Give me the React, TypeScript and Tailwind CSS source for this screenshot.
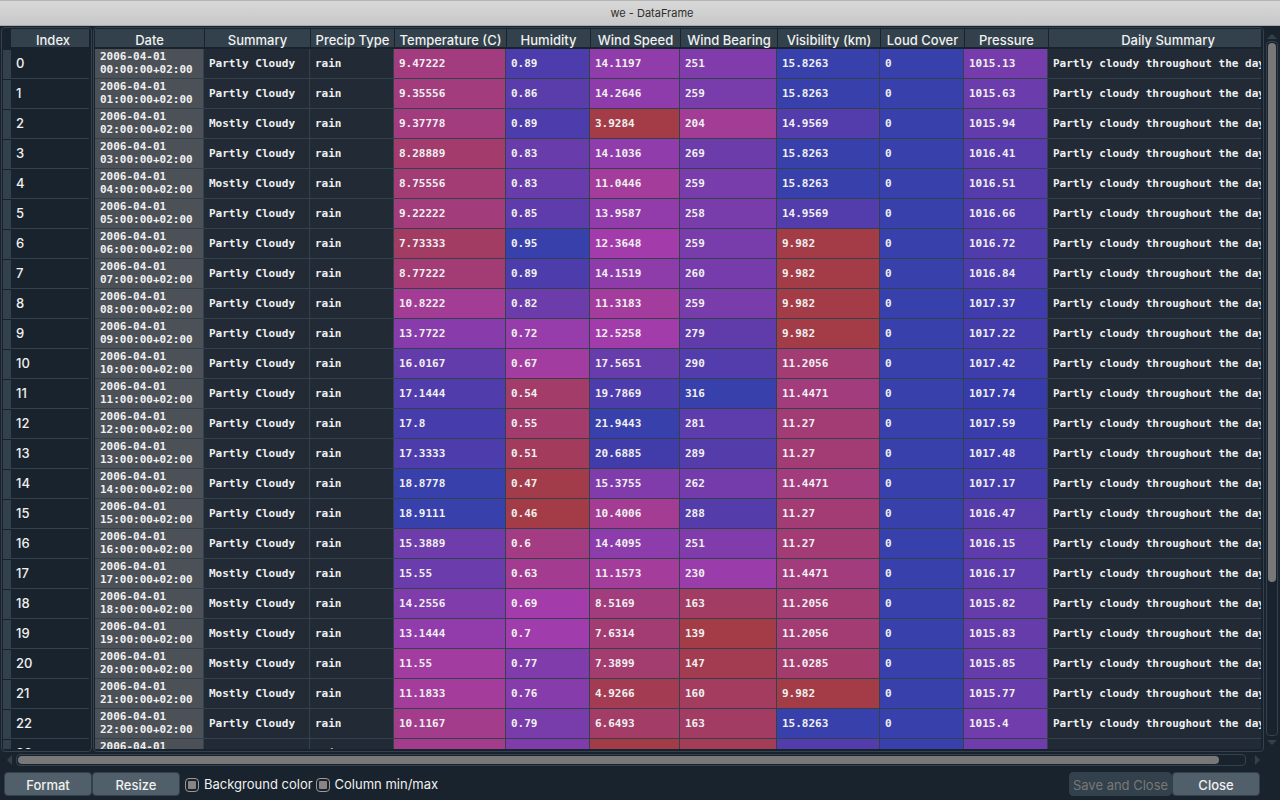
import React from "react";

type Row = [string, string, string, string, string, string, string, string, string];

// summary, temperature, humidity, wind speed, wind bearing, visibility, loud cover, pressure, daily summary
const daily = "Partly cloudy throughout the day.";
const P = "Partly Cloudy";
const M = "Mostly Cloudy";

const rows: Row[] = [
  [P, "9.47222", "0.89", "14.1197", "251", "15.8263", "0", "1015.13", daily],
  [P, "9.35556", "0.86", "14.2646", "259", "15.8263", "0", "1015.63", daily],
  [M, "9.37778", "0.89", "3.9284", "204", "14.9569", "0", "1015.94", daily],
  [P, "8.28889", "0.83", "14.1036", "269", "15.8263", "0", "1016.41", daily],
  [M, "8.75556", "0.83", "11.0446", "259", "15.8263", "0", "1016.51", daily],
  [P, "9.22222", "0.85", "13.9587", "258", "14.9569", "0", "1016.66", daily],
  [P, "7.73333", "0.95", "12.3648", "259", "9.982", "0", "1016.72", daily],
  [P, "8.77222", "0.89", "14.1519", "260", "9.982", "0", "1016.84", daily],
  [P, "10.8222", "0.82", "11.3183", "259", "9.982", "0", "1017.37", daily],
  [P, "13.7722", "0.72", "12.5258", "279", "9.982", "0", "1017.22", daily],
  [P, "16.0167", "0.67", "17.5651", "290", "11.2056", "0", "1017.42", daily],
  [P, "17.1444", "0.54", "19.7869", "316", "11.4471", "0", "1017.74", daily],
  [P, "17.8", "0.55", "21.9443", "281", "11.27", "0", "1017.59", daily],
  [P, "17.3333", "0.51", "20.6885", "289", "11.27", "0", "1017.48", daily],
  [P, "18.8778", "0.47", "15.3755", "262", "11.4471", "0", "1017.17", daily],
  [P, "18.9111", "0.46", "10.4006", "288", "11.27", "0", "1016.47", daily],
  [P, "15.3889", "0.6", "14.4095", "251", "11.27", "0", "1016.15", daily],
  [M, "15.55", "0.63", "11.1573", "230", "11.4471", "0", "1016.17", daily],
  [M, "14.2556", "0.69", "8.5169", "163", "11.2056", "0", "1015.82", daily],
  [M, "13.1444", "0.7", "7.6314", "139", "11.2056", "0", "1015.83", daily],
  [M, "11.55", "0.77", "7.3899", "147", "11.0285", "0", "1015.85", daily],
  [M, "11.1833", "0.76", "4.9266", "160", "9.982", "0", "1015.77", daily],
  [P, "10.1167", "0.79", "6.6493", "163", "15.8263", "0", "1015.4", daily],
  [M, "10.2", "0.77", "3.9284", "152", "14.9569", "0", "1015.51", daily],
];

const columns = [
  { name: "Date", width: "w-[109px]" },
  { name: "Summary", width: "w-[106px]" },
  { name: "Precip Type", width: "w-[84px]" },
  { name: "Temperature (C)", width: "w-[112px]" },
  { name: "Humidity", width: "w-[84px]" },
  { name: "Wind Speed", width: "w-[90px]" },
  { name: "Wind Bearing", width: "w-[97px]" },
  { name: "Visibility (km)", width: "w-[103px]" },
  { name: "Loud Cover", width: "w-[84px]" },
  { name: "Pressure", width: "w-[84px]" },
  { name: "Daily Summary", width: "" },
];

// [min, max] of each numeric column
const ranges: Record<number, [number, number]> = {
  1: [6, 18.9111],
  2: [0.46, 0.95],
  3: [3.9284, 21.9443],
  4: [139, 316],
  5: [9.982, 15.8263],
  6: [-1, 0],
  7: [1009.2, 1017.9],
};

function heat(column: number, value: number): string {
  const [min, max] = ranges[column];
  const hue = 0.66 + 0.33 * Math.min(1, (max - value) / (max - min));
  return `hsl(${(hue * 360).toFixed(1)} 100% 65% / 0.6)`;
}

function Arrow({ d }: { d: string }) {
  return (
    <svg viewBox="0 0 10 10" className="size-[10px] shrink-0 fill-[#32414b]" aria-hidden="true">
      <path d={d} />
    </svg>
  );
}

const pane = "overflow-hidden rounded border border-[#32414b] pt-px pr-0.5 pb-0.5 pl-px";
const heading = "border-b-2 border-[#19232d] bg-[#32414b] p-0 pt-1 leading-[14px] font-medium whitespace-nowrap";

function IndexTable() {
  return (
    <div className={`w-[91px] shrink-0 ${pane}`}>
      <div className="h-full overflow-hidden">
        <table className="w-full table-fixed border-separate border-spacing-0 text-[13px]">
          <thead>
            <tr className="h-5">
              <td className="w-2 p-0" />
              <th scope="col" className={`${heading} pl-1.5`}>
                Index
              </th>
            </tr>
          </thead>
          <tbody>
            {rows.map((_, i) => (
              <tr key={i} className="h-[30px]">
                <td className="border-t border-[#19232d] bg-[#32414b] p-0" />
                <th scope="row" className="border-b border-[#32414b] p-0 pb-0.5 pl-[5px] text-left leading-5 font-medium">
                  {i}
                </th>
              </tr>
            ))}
          </tbody>
        </table>
      </div>
    </div>
  );
}

function DataTable() {
  const cell = "overflow-hidden border-b border-[#32414b] py-0 pr-0 pl-[5px] whitespace-nowrap";
  return (
    <div id="frame" className={`ml-px min-w-0 flex-1 ${pane}`}>
      <div className="h-full overflow-hidden">
        <table className="w-[calc(100%+26px)] table-fixed border-separate border-spacing-0">
          <thead>
            <tr className="h-5 text-[13px]">
              {columns.map((c, i) => (
                <th key={c.name} scope="col" className={`${c.width} ${i > 0 ? "border-l" : ""} ${heading}`}>
                  {c.name}
                </th>
              ))}
            </tr>
          </thead>
          <tbody className="font-['DejaVu_Sans_Mono',monospace] text-[11px] leading-[13px] font-bold">
            {rows.map((r, i) => (
              <tr key={i} className="h-[30px]">
                <td className={`${cell} border-r bg-[#4c5158] pb-0.5`}>
                  2006-04-01
                  <br />
                  {String(i).padStart(2, "0")}:00:00+02:00
                </td>
                <td className={`${cell} border-r bg-[#222a35]`}>{r[0]}</td>
                <td className={`${cell} border-r bg-[#222a35]`}>rain</td>
                {r.slice(1, 8).map((v, j) => (
                  <td key={j} className={`${cell} border-r`} style={{ backgroundColor: heat(j + 1, Number(v)) }}>
                    {v}
                  </td>
                ))}
                <td className={`${cell} bg-[#222a35]`}>{r[8]}</td>
              </tr>
            ))}
          </tbody>
        </table>
      </div>
    </div>
  );
}

function Option({ label }: { label: string }) {
  return (
    <label className="flex items-center gap-[5px]">
      <input
        type="checkbox"
        defaultChecked
        className="size-[14px] appearance-none rounded-sm border border-[#9a9a9a] p-0.5 checked:bg-[#8a8583] checked:bg-clip-content"
      />
      {label}
    </label>
  );
}

export default function App() {
  const button = "h-6 rounded border border-[#32414b] pt-px leading-5 whitespace-nowrap";
  return (
    <div className="flex h-screen flex-col overflow-hidden bg-[#19232d] font-['Inter',sans-serif] text-[13px] text-[#f0f0f0]">
      <header className="flex h-[26px] shrink-0 items-center justify-center border-t border-b border-t-[#b4b4b4] border-b-[#a9a9a9] bg-linear-to-b from-[#d8d8d8] to-[#c8c8c8] pl-6">
        <h1 className="text-[11px] text-[#2e2e2e]">we - DataFrame</h1>
      </header>

      <main className="flex min-h-0 flex-1 pt-px pr-0.5 pl-px">
        <IndexTable />
        <DataTable />
        <div className="flex w-[14px] shrink-0 flex-col items-center pt-1 pl-0.5">
          <Arrow d="M0 8 L5 3 L10 8Z" />
          <div
            role="scrollbar"
            aria-label="Vertical scroll"
            aria-orientation="vertical"
            aria-controls="frame"
            aria-valuenow={0}
            className="w-3 flex-1 rounded border border-[#32414b] p-px"
          >
            <div className="h-[78%] rounded bg-[#787878]" />
          </div>
          <Arrow d="M0 4 L5 9 L10 4Z" />
          <div className="h-1.5" />
        </div>
      </main>

      <div className="flex h-4 shrink-0 items-center pr-[18px] pl-1">
        <Arrow d="M8 0 L3 5 L8 10Z" />
        <div
          role="scrollbar"
          aria-label="Horizontal scroll"
          aria-orientation="horizontal"
          aria-controls="frame"
          aria-valuenow={0}
          className="mr-1.5 ml-0.5 h-3 flex-1 rounded border border-[#32414b] p-px"
        >
          <div className="h-full w-[98%] rounded bg-[#787878]" />
        </div>
        <Arrow d="M3 0 L8 5 L3 10Z" />
      </div>

      <footer className="flex h-8 shrink-0 items-center pr-5 pl-1 font-medium">
        <button type="button" className={`${button} w-[88px] bg-[#505f69]`}>
          Format
        </button>
        <button type="button" className={`${button} w-[88px] bg-[#505f69]`}>
          Resize
        </button>
        <div className="ml-[5px] flex gap-[3px] pt-px font-normal">
          <Option label="Background color" />
          <Option label="Column min/max" />
        </div>
        <div className="flex-1" />
        <button type="button" disabled className={`${button} w-[103px] bg-[#32414b] font-normal text-[#787878]`}>
          Save and Close
        </button>
        <button type="button" className={`${button} w-[88px] bg-[#505f69]`}>
          Close
        </button>
      </footer>
    </div>
  );
}
